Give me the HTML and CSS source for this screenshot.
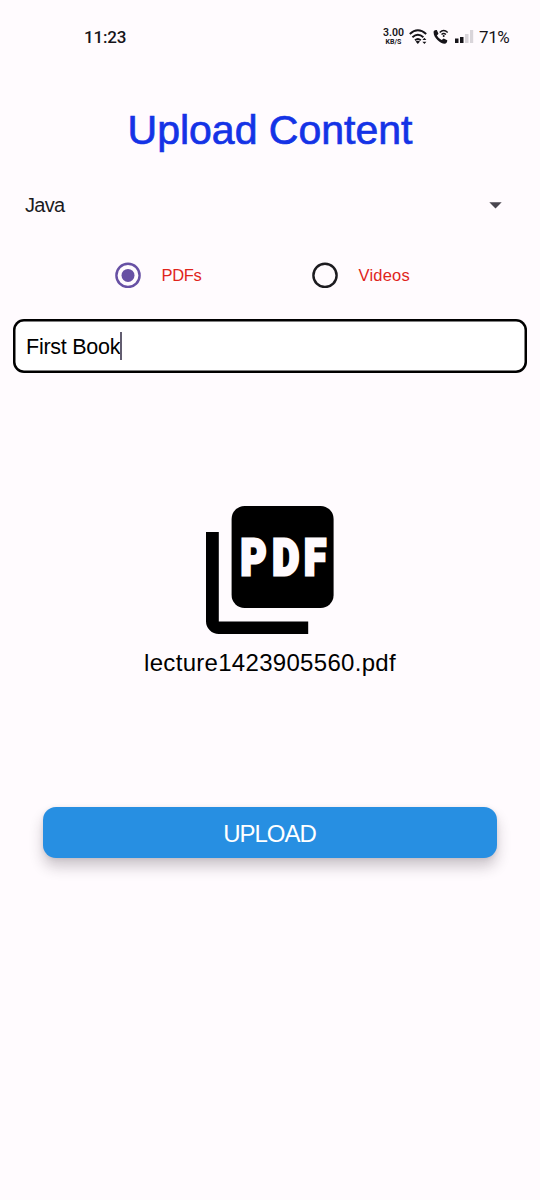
FILE: index.html
```html
<!DOCTYPE html>
<html lang="en">
<head>
<meta charset="utf-8">
<title>Upload Content</title>
<link rel="stylesheet" href="styles.css">
</head>
<body>
<header class="status">
  <span class="clock">11:23</span>
  <div class="indicators">
    <div class="speed"><span class="rate">3.00</span><span class="unit">KB/S</span></div>
    <svg class="wifi" width="19" height="16" viewBox="0 0 19 16" fill="none" stroke="#161419" stroke-width="1.9">
      <path d="M.8 5Q8.8-2.4 17.2 5M3.4 8.2Q8.9 3.4 14.4 8.2M6 11.2Q8.9 8.7 11.8 11.2"/>
      <path d="M8.8 15 6.6 12.6Q8.8 11 11 12.6ZM13.4 11 15.4 8.7 17.4 11ZM13.4 12.7 15.4 15 17.4 12.7Z" fill="#161419" stroke="none"/>
    </svg>
    <svg class="call" width="16" height="16" viewBox="0 0 16 16" fill="none" stroke="#161419">
      <path d="M.8 2Q2.4.7 3.8 1.1L5.5 4.7 3.9 6.6Q5.2 9.3 8.6 11.1L10.7 9.5 14.2 11.2Q14.6 13 12.8 14.6C8 16-.8 7.5.8 2Z" fill="#161419" stroke="none"/>
      <path d="M6.7 3.4Q10.7-.5 14.7 3.4M8.5 5.5Q10.7 3.4 12.9 5.5" stroke-width="1.4"/>
      <circle cx="10.7" cy="7" r="1" fill="#161419" stroke="none"/>
    </svg>
    <svg class="signal" width="19" height="14" viewBox="0 0 19 14">
      <path d="M0 8.5h3.5V13H0ZM5 7h3.5v6H5Z" fill="#161419"/>
      <path d="M10 4h3.5v9H10ZM15 0h3.2v13H15Z" fill="#d9d5da"/>
    </svg>
    <span class="battery">71%</span>
  </div>
</header>
<main class="screen">
  <h1 class="title">Upload Content</h1>
  <div class="spinner">
    <span class="course">Java</span>
    <svg width="13" height="7" viewBox="0 0 13 7"><path d="M.3.3h12.4L6.5 6.5Z" fill="#49454e"/></svg>
  </div>
  <div class="choices">
    <div class="choice">
      <svg width="26" height="26" viewBox="0 0 26 26"><circle cx="13" cy="13.4" r="11.6" fill="none" stroke="#6750a4" stroke-width="2.4"/><circle cx="13" cy="13.4" r="6.5" fill="#6750a4"/></svg>
      <span class="label pdfs">PDFs</span>
    </div>
    <div class="choice">
      <svg width="26" height="26" viewBox="0 0 26 26"><circle cx="13" cy="13.4" r="11.6" fill="none" stroke="#1c1b1f" stroke-width="2.4"/></svg>
      <span class="label videos">Videos</span>
    </div>
  </div>
  <div class="field"><span class="entry">First Book</span><i class="caret"></i></div>
  <section class="file">
    <svg width="128" height="128" viewBox="0 0 128 128">
      <path d="M0 26h12.8v89.5h89.4V128H12.8A12.8 12.8 0 0 1 0 115.2Z"/>
      <rect x="25.6" y="0" width="102" height="102" rx="13"/>
      <g class="badge">
        <text x="34.5" y="69" textLength="26" lengthAdjust="spacingAndGlyphs">P</text>
        <text x="66.3" y="69" textLength="27" lengthAdjust="spacingAndGlyphs">D</text>
        <text x="98" y="69" textLength="22" lengthAdjust="spacingAndGlyphs">F</text>
      </g>
    </svg>
    <span class="filename">lecture1423905560.pdf</span>
  </section>
  <button class="upload"><span>UPLOAD</span></button>
</main>
</body>
</html>
```
FILE: styles.css
```css
* { box-sizing: border-box; }
body {
  margin: 0;
  width: 540px;
  height: 1200px;
  background: #fffbfe;
  color: #000;
  font-family: "Liberation Sans", Arial, sans-serif;
  overflow: hidden;
}
svg { display: block; flex: none; }
.status {
  display: flex;
  justify-content: space-between;
  align-items: center;
  height: 74px;
  padding: 0 30px 0 84px;
  font-family: Roboto, sans-serif;
  color: #161419;
}
.clock { font-size: 17px; font-weight: 500; line-height: 20px; letter-spacing: -.2px; }
.indicators { display: flex; align-items: center; }
.speed { display: flex; flex-direction: column; align-items: center; width: 23px; margin-right: 4px; font-weight: 600; }
.rate { font-size: 10.5px; line-height: 10px; }
.unit { font-size: 7px; line-height: 8px; font-weight: 700; }
.wifi { margin-right: 5px; }
.call { margin-right: 6px; }
.signal { margin-right: 5px; }
.battery { font-size: 17px; line-height: 20px; width: 31px; letter-spacing: -0.4px; }
.screen { display: flex; flex-direction: column; }
.title {
  margin: 32px 0 0;
  height: 48px;
  font-size: 41px;
  line-height: 48px;
  font-weight: 400;
  text-align: center;
  color: #1433e6;
  -webkit-text-stroke: .7px #1433e6;
}
.spinner {
  display: flex;
  align-items: center;
  justify-content: space-between;
  height: 30px;
  margin-top: 36px;
  padding: 0 38px 0 25px;
  color: #1c1b1f;
}
.course { font-size: 20px; letter-spacing: -.7px; }
.choices { display: flex; padding-left: 115px; margin-top: 42px; height: 26px; }
.choice { display: flex; align-items: center; width: 197px; gap: 20.5px; color: #e0241b; }
.label { font-size: 16.5px; padding-top: 1px; }
.pdfs { letter-spacing: -.3px; }
.videos { letter-spacing: .2px; }
.field {
  display: flex;
  align-items: center;
  height: 54px;
  margin: 31px 13px 0;
  padding-left: 13px;
  border-radius: 11px;
  background: #fff;
  box-shadow: inset 0 0 0 2.5px #000;
  font-size: 21.5px;
}
.entry { padding-top: 3px; letter-spacing: -.25px; }
.caret { width: 2px; height: 28px; background: #625d70; }
.file { display: flex; flex-direction: column; align-items: center; margin-top: 133px; }
.badge { font-family: Roboto, sans-serif; font-weight: 900; font-size: 50px; fill: #fffbfe; stroke: #fffbfe; stroke-width: 3px; }
.filename { margin-top: 14px; font-size: 24px; line-height: 30px; letter-spacing: .3px; }
.upload {
  display: flex;
  align-items: center;
  justify-content: center;
  height: 51px;
  margin: 129px 43px 0;
  padding: 2px 1px 0 0;
  border: 0;
  border-radius: 13px;
  background: #278fe2;
  color: #fff;
  font: 24px "Liberation Sans", Arial, sans-serif;
  letter-spacing: -1px;
  box-shadow: 0 9px 14px rgba(45, 30, 45, .23), 0 1px 4px rgba(45, 30, 45, .1);
}
```
